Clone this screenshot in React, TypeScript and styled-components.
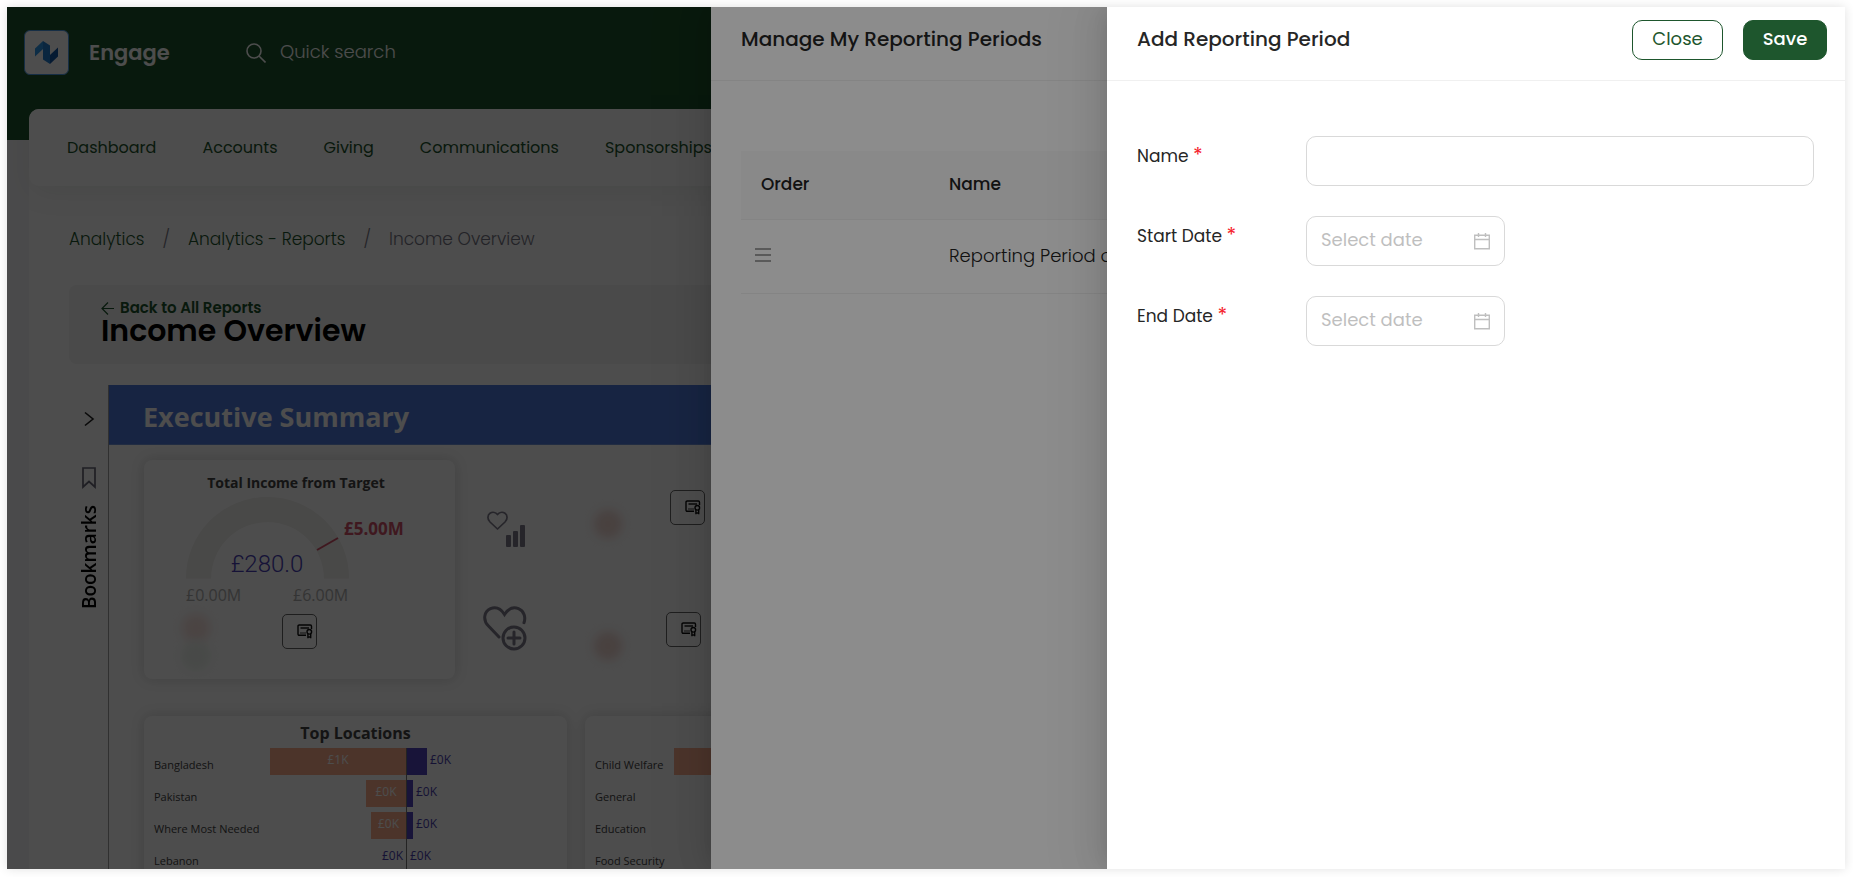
import React from "react";
import styled, { createGlobalStyle } from "styled-components";

const ui = `Poppins, Inter, "Open Sans", sans-serif`;
const report = `"Segoe UI", "Open Sans", "Noto Sans", sans-serif`;
const green = "#1e562d";

const GlobalStyle = createGlobalStyle`
  *, *::before, *::after { box-sizing: border-box; }
  body { margin: 0; background: #fff; font-family: ${ui}; color: #222; }
  h1, h2, h3, p { margin: 0; }
  button, input { font-family: inherit; }
`;

const Frame = styled.div`
  height: 100vh;
  padding: 7px 8px 8px 7px;
`;

const Screen = styled.div`
  position: relative;
  height: 100%;
  overflow: hidden;
  background: #fff;
  box-shadow: 0 0 10px rgba(0, 0, 0, 0.12);
`;

/* ---------- Page ---------- */

const Page = styled.div`
  height: 100%;
  overflow: hidden;
  background: #f8f8fa;
`;

const TopBar = styled.header`
  height: 133px;
  padding: 23px 17px 0;
  display: flex;
  align-items: flex-start;
  background: ${green};
`;

const Brand = styled.div`
  display: flex;
  align-items: center;
  gap: 20px;
  width: 222px;
`;

const LogoBox = styled.span`
  display: flex;
  width: 45px;
  height: 45px;
  border: 1px solid #4a9be8;
  border-radius: 6px;
  background: #fff;
`;

const BrandName = styled.span`
  font-size: 21px;
  line-height: 30px;
  font-weight: 600;
  color: #fff;
`;

const Search = styled.label`
  display: flex;
  align-items: center;
  gap: 14px;
  height: 45px;
`;

const SearchInput = styled.input`
  width: 300px;
  padding: 0 0 2px;
  border: 0;
  outline: 0;
  background: transparent;
  font-size: 18px;
  color: #fff;
  &::placeholder { color: #fff; opacity: 1; font-weight: 300; }
`;

const Shell = styled.div`
  margin: -31px 22px 0;
  border-radius: 10px;
  background: #fff;
`;

const Nav = styled.nav`
  height: 77px;
  padding: 0 38px;
  display: flex;
  align-items: center;
  gap: 46px;
  border-radius: 10px;
  background: #fff;
  box-shadow: 0 8px 30px rgba(0, 30, 10, 0.06);
`;

const NavLink = styled.a`
  font-size: 16px;
  line-height: 24px;
  color: ${green};
  text-decoration: none;
  white-space: nowrap;
`;

const Main = styled.main`
  padding: 40px 40px 0;
`;

const Crumbs = styled.nav`
  display: flex;
  gap: 18px;
  font-size: 17px;
  line-height: 26px;
  font-weight: 300;
  color: #777785;
  a { color: ${green}; text-decoration: none; }
`;

const TitlePanel = styled.section`
  height: 79px;
  margin-top: 33px;
  padding: 12px 32px 0;
  border-radius: 8px;
  background: #f6f6f6;
`;

const BackLink = styled.a`
  display: flex;
  align-items: center;
  gap: 6px;
  font-size: 15px;
  line-height: 22px;
  font-weight: 600;
  color: ${green};
  text-decoration: none;
`;

const PageTitle = styled.h1`
  font-size: 30px;
  line-height: 24px;
  font-weight: 600;
  color: #000;
`;

/* ---------- Embedded report ---------- */

const Report = styled.section`
  display: grid;
  grid-template-columns: 40px 1fr;
  height: 560px;
  margin-top: 21px;
  font-family: ${report};
`;

const SideRail = styled.aside`
  display: flex;
  flex-direction: column;
  align-items: center;
  padding-top: 26px;
  border-right: 1px solid #a0a0a0;
`;

const RailButton = styled.button`
  display: flex;
  padding: 0;
  border: 0;
  background: none;
  color: #222;
`;

const RailTab = styled.button`
  display: flex;
  flex-direction: column;
  align-items: center;
  gap: 16px;
  margin-top: 40px;
  padding: 0;
  border: 0;
  background: none;
  color: #000;
`;

const RailLabel = styled.span`
  writing-mode: vertical-rl;
  rotate: 180deg;
  font-size: 19px;
  line-height: 20px;
  font-weight: 600;
`;

const Banner = styled.h2`
  height: 60px;
  padding-left: 34px;
  border-bottom: 1px solid #6f93dd;
  background: #4f7bdc;
  font-size: 27px;
  line-height: 64px;
  font-weight: 700;
  color: #fff;
`;

const Canvas = styled.div`
  padding: 15px 0 0 35px;
`;

const TopRow = styled.div`
  display: grid;
  grid-template-columns: 311px 1fr;
  column-gap: 1px;
  height: 219px;
`;

const Card = styled.section`
  border-radius: 8px;
  background: #fff;
  box-shadow: 0 0 14px rgba(0, 0, 0, 0.16);
`;

const TargetCard = styled(Card)`
  padding-top: 13px;
`;

const TargetTitle = styled.h3`
  margin-right: 7px;
  font-size: 14px;
  line-height: 20px;
  font-weight: 700;
  text-align: center;
  color: #444;
`;

const Gauge = styled.svg`
  display: block;
  margin-left: 32px;
  margin-top: 4px;
`;

const IconButton = styled.button`
  display: flex;
  align-items: center;
  justify-content: flex-end;
  width: 35px;
  height: 35px;
  padding: 0 3px 0 0;
  border: 1px solid #666;
  border-radius: 5px;
  background: transparent;
  color: #111;
`;

const TargetFooter = styled.div`
  display: flex;
  align-items: flex-start;
  gap: 72px;
  padding: 7px 0 0 38px;
`;

const Smudge = styled.span<{ $tone: string }>`
  display: block;
  width: 28px;
  height: 28px;
  border-radius: 50%;
  background: ${(p) => p.$tone};
  filter: blur(5px);
`;

const Stats = styled.div`
  display: grid;
  grid-template-rows: 112px 1fr;
`;

const Stat = styled.section`
  display: grid;
  grid-template-columns: 108px 76px 1fr;
  align-items: start;
  padding: 30px 0 0 30px;
  & + & { padding-top: 40px; }
  & + & > :last-child { margin-left: -4px; }
`;

const StatIcon = styled.span<{ $low?: boolean }>`
  display: flex;
  padding-top: ${(p) => (p.$low ? 20 : 0)}px;
  margin-top: ${(p) => (p.$low ? 0 : -7)}px;
`;

const StatDot = styled.span`
  display: flex;
  padding-top: 20px;
`;

const BottomRow = styled.div`
  display: grid;
  grid-template-columns: 423px 423px;
  gap: 18px;
  margin-top: 37px;
`;

const ChartCard = styled(Card)`
  height: 300px;
  padding: 5px 10px 0;
`;

const ChartTitle = styled.h3`
  height: 27px;
  font-size: 16px;
  line-height: 24px;
  font-weight: 700;
  text-align: center;
  color: #444;
`;

const ChartRow = styled.div`
  display: grid;
  grid-template-columns: 116px 137px 1fr;
  height: 32px;
  font-size: 12px;
`;

const RowLabel = styled.span`
  padding-top: 3px;
  font-size: 11px;
  line-height: 28px;
  color: #444;
  white-space: nowrap;
`;

const Side = styled.span<{ $left?: boolean }>`
  display: flex;
  justify-content: ${(p) => (p.$left ? "flex-end" : "flex-start")};
  gap: 3px;
  line-height: 24px;
  color: #4a3fb0;
  border-right: ${(p) => (p.$left ? "1px solid #777" : "0")};
`;

const Bar = styled.span<{ $tone: string }>`
  height: 27px;
  background: ${(p) => p.$tone};
  color: #fff;
  text-align: center;
`;

const Figure = styled.span`
  padding-right: 3px;
`;

/* ---------- Drawers ---------- */

const Mask = styled.div`
  position: absolute;
  inset: 0;
  background: rgba(0, 0, 0, 0.45);
`;

const Drawer = styled.section<{ $width: number }>`
  position: absolute;
  top: 0;
  right: 0;
  bottom: 0;
  width: ${(p) => p.$width}px;
  max-width: 100%;
  background: #fff;
  box-shadow:
    -6px 0 16px -8px rgba(0, 0, 0, 0.1),
    -9px 0 28px 0 rgba(0, 0, 0, 0.07),
    -12px 0 48px 16px rgba(0, 0, 0, 0.04);
`;

const DrawerHeader = styled.header`
  display: flex;
  justify-content: space-between;
  height: 74px;
  padding: 13px 18px 20px 30px;
  border-bottom: 1px solid #f0f0f0;
`;

const DrawerTitle = styled.h2`
  font-size: 20px;
  line-height: 38px;
  font-weight: 500;
  color: #262626;
`;

const Actions = styled.div`
  display: flex;
  gap: 20px;
`;

const Action = styled.button<{ $primary?: boolean }>`
  height: 40px;
  width: ${(p) => (p.$primary ? 84 : 91)}px;
  padding: 0 0 2px;
  border: 1px solid ${green};
  border-radius: 10px;
  background: ${(p) => (p.$primary ? green : "#fff")};
  color: ${(p) => (p.$primary ? "#fff" : green)};
  font-size: 18px;
  line-height: 36px;
  font-weight: ${(p) => (p.$primary ? 500 : 400)};
`;

const TableWrap = styled.div`
  padding: 70px 30px 0;
`;

const Table = styled.table`
  width: 100%;
  border-collapse: separate;
  border-spacing: 0;
  table-layout: fixed;
  font-size: 17px;
  text-align: left;
  th, td { border-bottom: 1px solid #f0f0f0; }
  th {
    height: 69px;
    padding: 0 20px 2px;
    background: #f9f9f9;
    font-weight: 500;
    color: #222;
  }
  th:first-child { width: 188px; }
  td { height: 74px; padding: 0 20px 2px; font-size: 18px; font-weight: 300; color: #222; }
  td:first-child { padding: 0 14px 4px; }
`;

const DragHandle = styled.button`
  display: flex;
  padding: 0;
  border: 0;
  background: none;
  color: #888;
`;

const Form = styled.form`
  display: grid;
  gap: 30px;
  padding: 55px 31px 0 30px;
`;

const Field = styled.div`
  display: grid;
  grid-template-columns: 169px 1fr;
`;

const Label = styled.label`
  padding-top: 7px;
  font-size: 17px;
  line-height: 26px;
  color: #262626;
`;

const Required = styled.span`
  font-size: 20px;
  line-height: 1;
  color: #f5222d;
`;

const Box = styled.div<{ $narrow?: boolean }>`
  display: flex;
  align-items: center;
  width: ${(p) => (p.$narrow ? "199px" : "100%")};
  height: 50px;
  padding: 0 14px;
  border: 1px solid #d9d9d9;
  border-radius: 10px;
  color: #bfbfbf;
`;

const TextInput = styled.input`
  flex: 1;
  min-width: 0;
  padding: 0 0 2px;
  border: 0;
  outline: 0;
  background: transparent;
  font-size: 18px;
  line-height: 26px;
  color: #262626;
  &::placeholder { color: #bfbfbf; opacity: 1; }
`;

/* ---------- Drawings ---------- */

const Logo = () => (
  <svg width="43" height="43" viewBox="1 1 43 43" aria-hidden="true">
    <path d="M11 18.500 19 11v8l-8 7.500z" fill="#2f97ea" />
    <path d="M19 11l7 4.500V34l-7-4.500z" fill="#2480d2" />
    <path d="M26 25l8-7.500v9L26 34z" fill="#1358a8" />
  </svg>
);

const SearchIcon = () => (
  <svg width="20" height="20" viewBox="0 0 20 20" fill="none" stroke="#fff" strokeWidth="1.600" aria-hidden="true">
    <circle cx="8" cy="8" r="7" />
    <path d="M13 13l6.500 6.500" />
  </svg>
);

const ArrowLeft = () => (
  <svg width="13" height="13" viewBox="0 0 13 13" fill="none" stroke="currentColor" strokeWidth="1.200" aria-hidden="true">
    <path d="M13 6.500H1M7 .5l-6 6 6 6" />
  </svg>
);

const Chevron = () => (
  <svg width="12" height="16" viewBox="0 0 12 16" fill="none" stroke="currentColor" strokeWidth="1.600" aria-hidden="true">
    <path d="M2 1.500l8 6.500-8 6.500" />
  </svg>
);

const BookmarkIcon = () => (
  <svg width="14" height="22" viewBox="0 0 14 22" fill="none" stroke="#6a6878" strokeWidth="1.700" aria-hidden="true">
    <path d="M1 1h12v19l-6-5.500L1 20z" />
  </svg>
);

const Certificate = () => (
  <svg width="16" height="15" viewBox="0 0 16 15" fill="none" stroke="currentColor" strokeWidth="1.400" aria-hidden="true">
    <path d="M9 11.300H2.200C1.500 11.300 1 10.800 1 10.100V2.200C1 1.500 1.500 1 2.200 1h11.100c.7 0 1.200.5 1.200 1.200V5" />
    <path d="M3.500 4h8.500" />
    <path d="M3 9h6" stroke="#777" />
    <circle cx="12.300" cy="7.800" r="2.300" />
    <path d="M10.900 9.800v4.500M13.700 9.800v4.500M10.900 13h2.800" />
  </svg>
);

const HeartBars = () => (
  <svg width="40" height="38" viewBox="0 0 40 38" aria-hidden="true">
    <path
      d="M11.500 19 4 12C1 9 1.500 5 4 3.300 6.700 1.600 9.800 2.500 11.500 4.500c1.700-2 4.800-2.900 7.500-1.200 2.500 1.700 3 5.700 0 8.700z"
      fill="none" stroke="#7f7c8c" strokeWidth="1.700" strokeLinejoin="round"
    />
    <g fill="#7f7c8c">
      <rect x="20" y="25" width="5" height="12" rx="1" />
      <rect x="27" y="21" width="5" height="16" rx="1" />
      <rect x="34" y="15" width="5" height="22" rx="1" />
    </g>
  </svg>
);

const HeartPlus = () => (
  <svg width="46" height="46" viewBox="5 0 46 46" overflow="visible" fill="none" stroke="#7f7c8c" strokeWidth="3" strokeLinecap="round" aria-hidden="true">
    <path d="M18 32 7.500 21C1.500 15 3 6.500 9.500 3.700 15 1.500 20 4 23.500 9.500 27 4 32 1.500 37.500 3.700c5.500 2.300 7.500 8.300 5.500 14" />
    <circle cx="33" cy="33" r="11" />
    <path d="M33 27v12M27 33h12" />
  </svg>
);

const MenuIcon = () => (
  <svg width="16" height="14" viewBox="0 0 16 14" stroke="currentColor" strokeWidth="1.500" aria-hidden="true">
    <path d="M0 1h16M0 7h16M0 13h16" />
  </svg>
);

const CalendarIcon = () => (
  <svg width="16" height="17" viewBox="0 0 16 17" fill="none" stroke="currentColor" strokeWidth="1.400" aria-hidden="true">
    <path d="M.7 2.200h14.600v13.600H.7zM.7 6.500h14.600M4.500 0v4M11.500 0v4" />
  </svg>
);

/* ---------- Data ---------- */

const navItems = ["Dashboard", "Accounts", "Giving", "Communications", "Sponsorships"];

type Row = { name: string; left?: number; leftText?: string; right?: number; rightText?: string };

const locations: Row[] = [
  { name: "Bangladesh", left: 136, leftText: "£1K", right: 20, rightText: "£0K" },
  { name: "Pakistan", left: 40, leftText: "£0K", right: 6, rightText: "£0K" },
  { name: "Where Most Needed", left: 35, leftText: "£0K", right: 6, rightText: "£0K" },
  { name: "Lebanon", left: 0, leftText: "£0K", right: 0, rightText: "£0K" },
];

const causes: Row[] = [
  { name: "Child Welfare", left: 160 },
  { name: "General" },
  { name: "Education" },
  { name: "Food Security" },
];

const CauseRow = styled(ChartRow)`
  grid-template-columns: 79px 1fr;
`;

const orange = "#fcae8e";
const violet = "#5044be";

export default function App() {
  return (
    <>
      <GlobalStyle />
      <Frame>
        <Screen>
          <Page>
            <TopBar>
              <Brand>
                <LogoBox><Logo /></LogoBox>
                <BrandName>Engage</BrandName>
              </Brand>
              <Search>
                <SearchIcon />
                <SearchInput type="search" placeholder="Quick search" aria-label="Quick search" />
              </Search>
            </TopBar>
            <Shell>
              <Nav>
                {navItems.map((item) => <NavLink key={item} href="#">{item}</NavLink>)}
              </Nav>
              <Main>
                <Crumbs aria-label="Breadcrumb">
                  <a href="#">Analytics</a>
                  <span>/</span>
                  <a href="#">Analytics - Reports</a>
                  <span>/</span>
                  <span>Income Overview</span>
                </Crumbs>
                <TitlePanel>
                  <BackLink href="#"><ArrowLeft />Back to All Reports</BackLink>
                  <PageTitle>Income Overview</PageTitle>
                </TitlePanel>
                <Report>
                  <SideRail>
                    <RailButton aria-label="Expand"><Chevron /></RailButton>
                    <RailTab>
                      <BookmarkIcon />
                      <RailLabel>Bookmarks</RailLabel>
                    </RailTab>
                  </SideRail>
                  <div>
                    <Banner>Executive Summary</Banner>
                    <Canvas>
                      <TopRow>
                        <TargetCard>
                          <TargetTitle>Total Income from Target</TargetTitle>
                          <Gauge width="240" height="110" viewBox="176 497 240 110">
                            <path d="M186 578.500a81.500 81.500 0 0 1 163 0h-25a56.500 56.500 0 0 0-113 0z" fill="#f3f2ef" />
                            <path d="M317 550l21-12" stroke="#d4506a" strokeWidth="2" />
                            <g fontFamily={report}>
                              <text x="344" y="535" fontSize="17" fontWeight="700" fill="#d4506a">£5.00M</text>
                              <text x="186" y="601" fontSize="16" fill="#b0b0b0">£0.00M</text>
                              <text x="293" y="601" fontSize="16" fill="#b0b0b0">£6.00M</text>
                            </g>
                            <text x="267" y="572" fontSize="24" textAnchor="middle" fontFamily="Roboto, sans-serif" fontWeight="300" fill="#4a3fb8">£280.0</text>
                          </Gauge>
                          <TargetFooter>
                            <div>
                              <Smudge $tone="#f9e4e0" />
                              <Smudge $tone="#eef5ee" />
                            </div>
                            <IconButton aria-label="Certificate"><Certificate /></IconButton>
                          </TargetFooter>
                        </TargetCard>
                        <Stats>
                          <Stat>
                            <StatIcon $low><HeartBars /></StatIcon>
                            <StatDot><Smudge $tone="#f3d9d4" /></StatDot>
                            <IconButton aria-label="Certificate"><Certificate /></IconButton>
                          </Stat>
                          <Stat>
                            <StatIcon><HeartPlus /></StatIcon>
                            <StatDot><Smudge $tone="#f3d9d4" /></StatDot>
                            <IconButton aria-label="Certificate"><Certificate /></IconButton>
                          </Stat>
                        </Stats>
                      </TopRow>
                      <BottomRow>
                        <ChartCard>
                          <ChartTitle>Top Locations</ChartTitle>
                          {locations.map((r) => (
                            <ChartRow key={r.name}>
                              <RowLabel>{r.name}</RowLabel>
                              <Side $left>
                                {r.left ? <Bar $tone={orange} style={{ width: r.left }}>{r.leftText}</Bar> : <Figure>{r.leftText}</Figure>}
                              </Side>
                              <Side>
                                <Bar $tone={violet} style={{ width: r.right }} />
                                <span>{r.rightText}</span>
                              </Side>
                            </ChartRow>
                          ))}
                        </ChartCard>
                        <ChartCard>
                          <ChartTitle />
                          {causes.map((r) => (
                            <CauseRow key={r.name}>
                              <RowLabel>{r.name}</RowLabel>
                              <Side>{r.left && <Bar $tone={orange} style={{ width: r.left }} />}</Side>
                            </CauseRow>
                          ))}
                        </ChartCard>
                      </BottomRow>
                    </Canvas>
                  </div>
                </Report>
              </Main>
            </Shell>
          </Page>

          <Mask />
          <Drawer $width={1134} aria-label="Manage My Reporting Periods">
            <DrawerHeader>
              <DrawerTitle>Manage My Reporting Periods</DrawerTitle>
            </DrawerHeader>
            <TableWrap>
              <Table>
                <thead>
                  <tr><th scope="col">Order</th><th scope="col">Name</th></tr>
                </thead>
                <tbody>
                  <tr>
                    <td><DragHandle aria-label="Reorder"><MenuIcon /></DragHandle></td>
                    <td>Reporting Period one</td>
                  </tr>
                </tbody>
              </Table>
            </TableWrap>
          </Drawer>

          <Mask />
          <Drawer $width={738} role="dialog" aria-label="Add Reporting Period">
            <DrawerHeader>
              <DrawerTitle>Add Reporting Period</DrawerTitle>
              <Actions>
                <Action type="button">Close</Action>
                <Action type="submit" form="period-form" $primary>Save</Action>
              </Actions>
            </DrawerHeader>
            <Form id="period-form">
              <Field>
                <Label htmlFor="name">Name <Required>*</Required></Label>
                <Box><TextInput id="name" type="text" /></Box>
              </Field>
              <Field>
                <Label htmlFor="start">Start Date <Required>*</Required></Label>
                <Box $narrow><TextInput id="start" type="text" placeholder="Select date" /><CalendarIcon /></Box>
              </Field>
              <Field>
                <Label htmlFor="end">End Date <Required>*</Required></Label>
                <Box $narrow><TextInput id="end" type="text" placeholder="Select date" /><CalendarIcon /></Box>
              </Field>
            </Form>
          </Drawer>
        </Screen>
      </Frame>
    </>
  );
}
